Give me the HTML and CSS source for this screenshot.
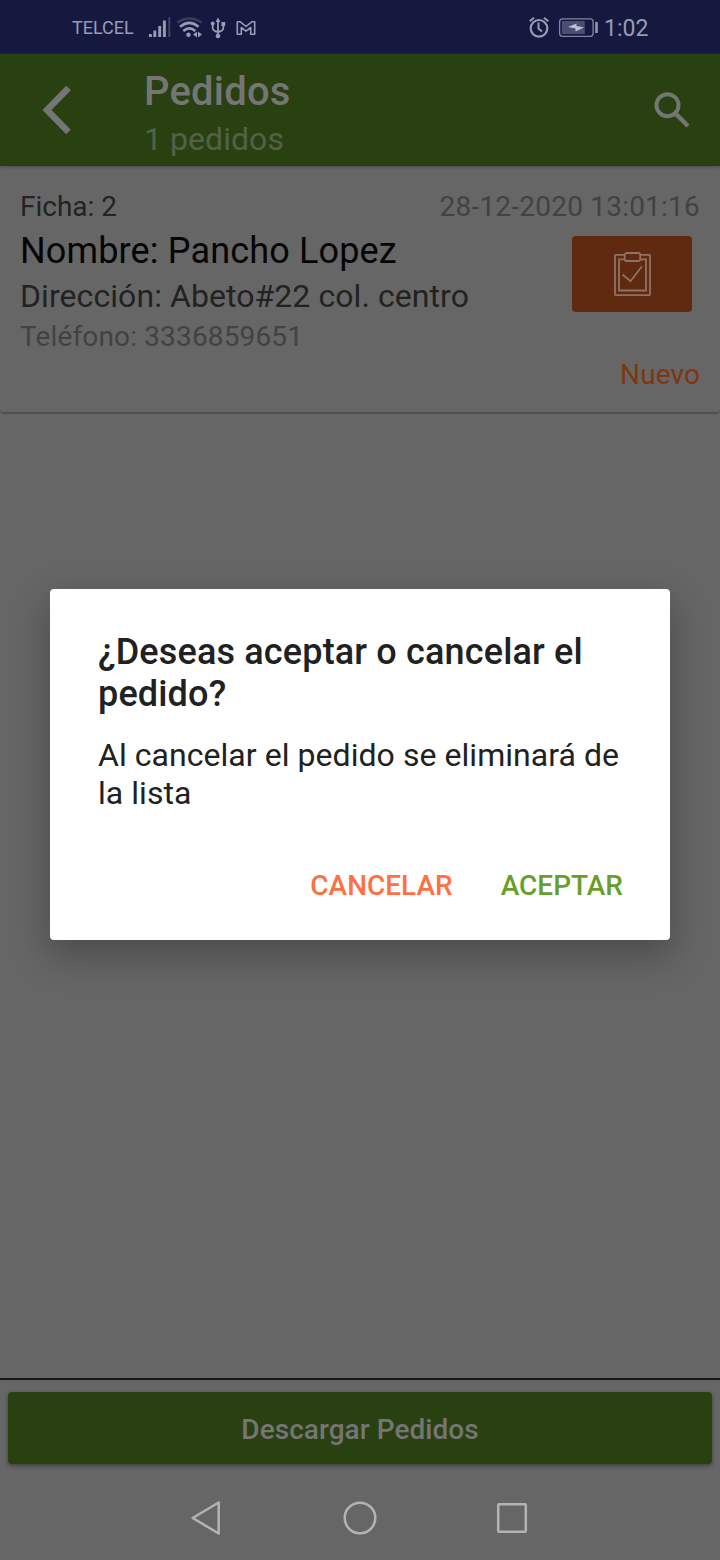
FILE: index.html
```html
<!DOCTYPE html>
<html lang="es">
<head>
<meta charset="utf-8">
<title>Pedidos</title>
<link rel="stylesheet" href="styles.css">
</head>
<body>
<div class="screen">
  <div class="status">
    <span class="carrier">TELCEL</span>
    <svg class="status-left" width="112" height="54" viewBox="146 0 112 54" fill="none" stroke="#999bb2">
      <g stroke-width="2.9"><path d="M150.400 34v3M154.800 30.500v6.500M159.700 26v11M164.400 20.500v16.500"/><path d="M169.300 17v20" stroke="#41445f" stroke-width="2"/></g>
      <path d="M177.500 22.500q12-8 24 0" stroke="#383c60" stroke-width="2.600"/>
      <path d="M180 26.700q9.500-7.800 18.500 0M183.300 31q6.200-5.300 12 0" stroke-width="2.600"/>
      <circle cx="188.500" cy="34.800" r="2.200" fill="#999bb2" stroke="none"/>
      <path d="M197 31.500v6l-4-3zM198 31.500v6l4-3z" fill="#999bb2" stroke="none"/>
      <path d="M218 21v15M212.700 24v4q0 3 5.300 4M223.300 24v4q0 3-5.300 4" stroke-width="1.800"/>
      <path d="M218 17.500l-2.500 4.500h5zM221.400 22h3.800v4h-3.800z" fill="#999bb2" stroke="none"/>
      <circle cx="212.700" cy="23.500" r="2" fill="#999bb2" stroke="none"/><circle cx="218" cy="36" r="2.300" fill="#999bb2" stroke="none"/>
      <path d="M237.300 34.300V21.700h2.700l6 4.800 6-4.800h2.700v12.600h-4V27.500l-4.700 3.700-4.700-3.700v6.800z" stroke-width="1.600" stroke-linejoin="round"/>
    </svg>
    <svg class="status-right" width="76" height="54" viewBox="526 0 76 54" fill="none" stroke="#999bb2">
      <circle cx="539" cy="28.300" r="8.300" stroke-width="2.200"/>
      <path d="M538.500 22.500v6l3.500 3M529.700 21.300l4.300-3.500M544 17.800l4.300 3.500" stroke-width="2"/>
      <rect x="559.600" y="18.800" width="33.500" height="17.500" rx="3" stroke="#83859f" stroke-width="1.300"/>
      <path d="M561.800 21h23v13h-23z" fill="#4b4e73" stroke="none"/>
      <path d="M568 27l8.500-3.500v2.500l7.500 1.500-8.500 4v-3z" fill="#bfc0cd" stroke="none"/>
      <path d="M596.500 22v11" stroke-width="2.500"/>
    </svg>
    <span class="clock">1:02</span>
  </div>
  <header class="toolbar">
    <svg class="back" width="32" height="52" viewBox="0 0 32 52" fill="none" stroke="#757575" stroke-width="6.500"><path d="M27.500 4L6 26l21.500 22"/></svg>
    <div class="headings"><h1 class="title">Pedidos</h1><div class="subtitle">1 pedidos</div></div>
    <svg class="search" width="38" height="38" viewBox="0 0 38 38" fill="none" stroke="#757575"><circle cx="14.500" cy="14.200" r="11" stroke-width="4"/><path d="M22.500 22.500L35 35" stroke-width="4.500"/></svg>
  </header>
  <main class="orders">
    <article class="order">
      <div class="row"><span class="ficha">Ficha: 2</span><time class="date">28-12-2020 13:01:16</time></div>
      <div class="details">
        <div class="customer">
          <div class="name">Nombre: Pancho Lopez</div>
          <div class="address">Dirección: Abeto#22 col. centro</div>
          <div class="phone">Teléfono: 3336859651</div>
        </div>
        <div class="action">
          <svg width="38" height="46" viewBox="0 0 38 46" fill="none" stroke="#8f7265" stroke-width="1.800"><path d="M11.500 3.800H3q-1 0-1 1v38.400q0 1 1 1h33q1 0 1-1V4.800q0-1-1-1h-8.500"/><path d="M11.500 8.300H6v31.200h27V8.300h-5.500"/><rect x="11.700" y="2" width="15.500" height="8" rx="2"/><path d="M9.500 23.500l8 6.800L28.800 15.500"/></svg>
        </div>
      </div>
      <div class="state">Nuevo</div>
    </article>
  </main>
  <footer class="footer"><div class="download">Descargar Pedidos</div></footer>
  <nav class="nav">
    <svg width="340" height="40" viewBox="190 1498 340 40" fill="none" stroke="#b3b3b3" stroke-width="2.500" stroke-linejoin="round"><path d="M192.700 1518l26-15.500v31z"/><circle cx="360" cy="1518" r="15.300"/><rect x="498.200" y="1504.200" width="27.600" height="27.600" rx="1"/></svg>
  </nav>
  <section class="dialog">
    <h2 class="question">¿Deseas aceptar o cancelar el<br>pedido?</h2>
    <p class="message">Al cancelar el pedido se eliminará de<br>la lista</p>
    <div class="buttons"><span class="cancel">CANCELAR</span><span class="accept">ACEPTAR</span></div>
  </section>
</div>
</body>
</html>
```
FILE: styles.css
```css
* { box-sizing: border-box; }
body { margin: 0; font-family: Roboto, sans-serif; background: #666; }
h1, h2, p { margin: 0; }
svg { display: block; flex: none; }
.screen { position: relative; width: 720px; height: 1560px; display: flex; flex-direction: column; overflow: hidden; white-space: nowrap; }
.status { height: 54px; background: #151940; display: flex; align-items: center; padding-left: 72px; color: #999bb2; }
.carrier { width: 74px; font-size: 18px; line-height: 54px; padding-top: 1px; }
.status-right { margin-left: 268px; }
.clock { margin-left: 2px; font-size: 23px; line-height: 54px; padding-top: 3px; }
.toolbar { height: 112px; background: #294110; display: flex; align-items: flex-start; padding: 13px 29px 0 41px; box-shadow: 0 1px 3px #4b4b4b; }
.back { margin-top: 17px; }
.headings { flex: 1; margin-left: 71px; }
.title { font-size: 40px; font-weight: 500; line-height: 50px; color: #757575; letter-spacing: .2px; }
.subtitle { font-size: 32px; line-height: 44px; color: #53614a; letter-spacing: .05px; }
.search { margin-top: 24px; }
.orders { flex: 1; }
.order { height: 248px; padding: 20px 20px 0; border-bottom: 2px solid #515151; border-radius: 0 0 4px 4px; }
.row { display: flex; justify-content: space-between; line-height: 41px; font-size: 28px; }
.ficha { color: #222; }
.date { color: #424242; letter-spacing: .22px; }
.details { display: flex; justify-content: space-between; height: 128px; }
.name { font-size: 36px; line-height: 48px; color: #050505; letter-spacing: .15px; }
.address { font-size: 32px; line-height: 42px; color: #222; letter-spacing: .07px; }
.phone { font-size: 28px; line-height: 40px; color: #424242; letter-spacing: .15px; }
.action { width: 120px; height: 76px; margin: 9px 8px 0 0; border-radius: 4px; background: #602a11; display: flex; align-items: center; justify-content: center; }
.state { text-align: right; font-size: 28px; line-height: 40px; color: #803511; letter-spacing: .1px; }
.footer { height: 98px; border-top: 2px solid #161616; padding: 12px 8px; }
.download { height: 72px; border-radius: 4px; background: #294110; box-shadow: 0 2px 4px #404040; text-align: center; font-size: 28px; font-weight: 500; line-height: 76px; color: #757575; letter-spacing: .05px; }
.nav { height: 84px; padding: 22px 0 0 190px; }
.dialog { position: absolute; left: 50px; top: 589px; width: 620px; height: 351px; border-radius: 4px; background: #fff; box-shadow: 0 14px 36px 3px rgba(0,0,0,.25); padding: 42px 47px 0 48px; }
.question { font-size: 36px; line-height: 42px; font-weight: 500; color: #212121; letter-spacing: .16px; }
.message { margin-top: 21px; font-size: 32px; line-height: 38px; color: #212121; letter-spacing: .05px; }
.buttons { margin-top: 54px; display: flex; justify-content: flex-end; gap: 48px; font-size: 28px; line-height: 40px; font-weight: 500; }
.cancel { color: #ff7043; }
.accept { color: #689f2b; }
```
